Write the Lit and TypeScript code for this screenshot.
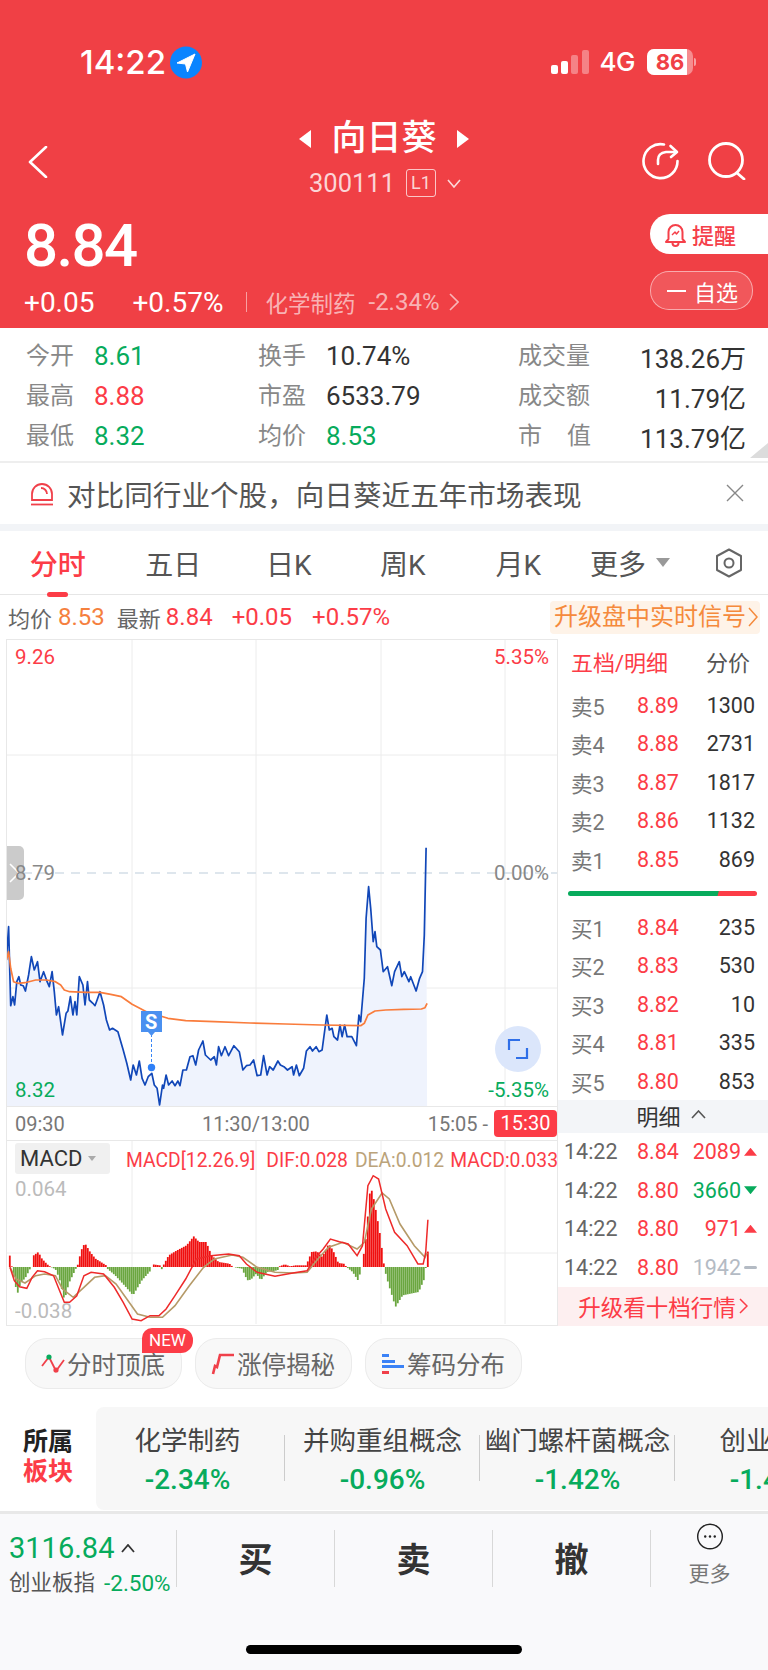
import { LitElement, html, css, svg } from 'lit';
import { customElement } from 'lit/decorators.js';

// traced from the reference, units are crop pixels (x / 2.8, y / 3)
const PRICE = [18,975,24,875,30,1112,36,1085,41,1110,47,1040,53,1025,58,1050,65,1052,71,1068,80,1020,88,965,96,1005,105,980,112,1040,122,1010,132,1040,138,1055,146,1010,152,1070,158,1140,164,1115,175,1200,185,1135,190,1128,197,1085,204,1140,210,1100,215,1140,222,1025,232,1050,238,1110,245,1040,250,1095,260,1105,266,1112,272,1095,280,1070,290,1110,298,1155,307,1185,315,1180,330,1190,345,1245,355,1285,366,1335,373,1290,382,1320,390,1278,398,1330,406,1350,415,1325,425,1315,432,1350,440,1360,447,1410,455,1350,458,1360,465,1320,472,1350,482,1338,490,1352,498,1338,504,1352,512,1305,522,1305,532,1265,540,1262,548,1290,556,1245,568,1218,575,1260,590,1275,600,1265,606,1290,612,1235,620,1262,630,1235,640,1262,655,1232,670,1250,680,1305,690,1292,700,1290,710,1275,720,1322,730,1320,738,1262,748,1320,755,1295,765,1305,778,1278,785,1290,795,1295,805,1305,818,1295,822,1320,830,1290,838,1322,850,1300,858,1248,868,1235,875,1248,885,1235,893,1250,902,1245,915,1140,922,1185,930,1180,935,1205,945,1215,952,1170,958,1205,965,1170,972,1205,985,1205,998,1232,1005,1140,1010,1160,1020,1030,1025,850,1032,755,1038,820,1045,920,1050,890,1055,935,1065,945,1073,1010,1085,995,1097,1052,1105,1010,1118,980,1125,1025,1132,1010,1145,1040,1150,1025,1165,1068,1175,1030,1183,1010,1188,900,1193,638];
const AVG = [18,975,24,950,30,1000,38,1040,50,1045,70,1043,100,1035,130,1035,155,1040,170,1050,180,1065,195,1070,240,1072,280,1072,310,1078,340,1085,370,1108,410,1130,470,1150,520,1157,600,1160,700,1164,800,1167,900,1170,1010,1172,1020,1165,1030,1140,1050,1128,1080,1125,1130,1123,1180,1122,1190,1118,1196,1105];
const DIF = [28,505,40,545,55,563,75,568,90,535,105,515,125,518,150,530,165,570,180,610,195,610,215,590,235,530,255,520,290,525,320,565,345,610,370,660,395,665,420,650,445,650,465,630,490,590,520,540,550,480,590,470,640,465,670,470,690,495,720,520,770,532,820,522,860,515,880,480,905,450,925,420,950,428,975,435,1000,470,1015,440,1030,260,1045,230,1060,240,1080,330,1105,400,1140,440,1170,495,1185,495,1192,460,1198,362];
const DEA = [28,505,45,540,70,552,100,530,125,525,155,530,175,570,205,595,235,565,265,535,295,530,325,555,355,600,385,645,420,655,455,655,490,620,530,560,570,505,600,480,650,468,680,475,720,505,770,520,820,522,860,520,890,480,920,445,960,430,1000,450,1020,430,1040,330,1070,282,1090,300,1120,375,1160,440,1190,475,1196,462];
const HIST = [24,40,30,5,32,-5,38,-40,46,-82,55,-50,70,-30,82,-5,88,0,92,35,105,45,115,25,130,8,140,0,150,-5,155,-10,165,-40,178,-100,190,-50,210,-5,215,5,225,50,235,72,250,45,265,25,280,15,295,5,298,-5,320,-25,350,-60,370,-85,395,-40,420,-10,425,8,445,5,450,-8,455,5,470,35,490,48,520,65,540,92,555,75,575,75,590,35,610,15,640,10,650,0,675,-5,690,-40,700,-38,715,-20,728,-40,745,-15,775,-10,780,2,795,8,810,2,825,5,855,5,870,45,885,47,900,30,918,70,930,50,945,12,960,10,970,-2,985,-15,1000,-40,1010,-5,1015,30,1022,85,1035,245,1045,200,1060,110,1070,30,1074,-5,1085,-50,1105,-120,1125,-85,1170,-75,1188,-30,1190,0,1197,60];

const GRID_X = [125, 249, 374, 498];

function pts(raw: number[], dy: number) {
  const out: string[] = [];
  for (let i = 0; i < raw.length; i += 2) {
    out.push(`${(raw[i] / 2.8 - 7).toFixed(1)},${(raw[i + 1] / 3 + dy).toFixed(1)}`);
  }
  return out.join(' ');
}

function histAt(x: number) {
  for (let i = 0; i < HIST.length - 2; i += 2) {
    if (x >= HIST[i] && x <= HIST[i + 2]) {
      const t = (x - HIST[i]) / (HIST[i + 2] - HIST[i]);
      return HIST[i + 1] + (HIST[i + 3] - HIST[i + 1]) * t;
    }
  }
  return 0;
}

const ASKS = [['卖5', '8.89', '1300'], ['卖4', '8.88', '2731'], ['卖3', '8.87', '1817'], ['卖2', '8.86', '1132'], ['卖1', '8.85', '869']];
const BIDS = [['买1', '8.84', '235'], ['买2', '8.83', '530'], ['买3', '8.82', '10'], ['买4', '8.81', '335'], ['买5', '8.80', '853']];
const TICKS = [['8.84', '2089', 'up'], ['8.80', '3660', 'down'], ['8.80', '971', 'up'], ['8.80', '1942', 'flat']];
const SECTORS = [['化学制药', '-2.34%'], ['并购重组概念', '-0.96%'], ['幽门螺杆菌概念', '-1.42%'], ['创业板综', '-1.47%']];

@customElement('app-root')
export class AppRoot extends LitElement {
  static styles = css`
    :host {
      display: block;
      width: 768px;
      height: 1670px;
      overflow: hidden;
      background: #fff;
      color: #333;
      font-family: Roboto, 'Noto Sans CJK SC', sans-serif;
    }
    svg { display: block; }

    .header { height: 328px; background: #f04045; color: #fff; display: flex; flex-direction: column; }
    .status { height: 115px; padding: 9px 72px 0 80px; box-sizing: border-box; display: flex; align-items: center; }
    .time { font: 500 33px/40px Inter, sans-serif; width: 90px; white-space: nowrap; }
    .status-right { margin-left: auto; display: flex; align-items: center; }
    .net { font: 500 26px/30px Inter, sans-serif; margin: 0 12px 0 11px; letter-spacing: -0.5px; }
    .battery { position: relative; width: 46px; height: 26px; border-radius: 7px; overflow: hidden; background: rgba(255,255,255,.4); }
    .battery i { display: block; width: 86%; height: 100%; background: #fff; }
    .battery b { position: absolute; inset: 0; text-align: center; font: 700 22px/26px Inter, sans-serif; color: #f04045; }
    .nub { width: 2px; height: 8px; background: rgba(255,255,255,.5); border-radius: 0 2px 2px 0; margin-left: 1px; }

    .nav { height: 90px; display: grid; grid-template-columns: 240px 1fr 240px; }
    .back { padding: 31px 0 0 28px; }
    .nav-mid { display: flex; flex-direction: column; align-items: center; }
    .title { display: flex; align-items: center; height: 44px; margin-top: 2px; gap: 20px; font-size: 35px; font-weight: 500; line-height: 44px; }
    .sub { display: flex; align-items: center; height: 40px; margin-top: 2px; color: rgba(255,255,255,.78); font-size: 25.5px; gap: 11px; padding-left: 2px; }
    .l1 { width: 30px; height: 28px; box-sizing: border-box; border: 1px solid rgba(255,255,255,.7); border-radius: 3px; font-size: 18px; line-height: 26px; text-align: center; }
    .nav-icons { display: flex; justify-content: flex-end; gap: 28px; padding: 27px 22px 0 0; }

    .quote { flex: 1; display: flex; justify-content: space-between; }
    .quote-left { padding: 9px 0 0 24px; }
    .price { font: 500 60px/64px Roboto, sans-serif; letter-spacing: -1.6px; }
    .change { display: flex; align-items: center; height: 30px; margin-top: 9px; font-size: 28px; }
    .change span { white-space: nowrap; }
    .pct { margin-left: 38px; }
    .sep { width: 1px; height: 20px; background: rgba(255,255,255,.5); margin: 0 18px 0 23px; }
    .sector { font-size: 22.5px; color: rgba(255,255,255,.62); display: flex; align-items: center; gap: 13px; }
    .sector em { font-style: normal; font-size: 24px; margin-right: -4px; }
    .quote-right { width: 118px; padding-top: 9px; }
    .btn-remind { height: 40px; background: #fff; border-radius: 20px 0 0 20px; display: flex; align-items: center; padding-left: 15px; gap: 6px; color: #f5404a; font-size: 22px; font-weight: 500; }
    .btn-fav { width: 103px; height: 39px; box-sizing: border-box; margin-top: 17px; border: 1px solid rgba(255,255,255,.5); background: rgba(255,255,255,.12); border-radius: 19px; display: flex; align-items: center; padding-left: 16px; gap: 8px; font-size: 22px; }
    .btn-fav i { width: 19px; height: 2px; background: #fff; }

    .stats { position: relative; height: 135px; box-sizing: border-box; padding: 8px 22px 0 26px; border-bottom: 2px solid #eee; display: grid; grid-template-columns: 232px 260px 1fr; grid-auto-rows: 40px; font-size: 26px; align-items: center; }
    .cell { display: flex; align-items: center; color: #333; }
    .cell label { width: 68px; color: #888; font-size: 24px; flex: none; margin-bottom: 5px; }
    .cell.wide { justify-content: space-between; }
    .cell.wide label { width: 73px; display: flex; justify-content: space-between; }
    .corner { position: absolute; right: 0; bottom: 3px; width: 18px; height: 15px; background: #dcdcdc; clip-path: polygon(100% 0, 100% 100%, 0 100%); }
    .green { color: #07ab5c; }
    .red { color: #fc3c47; }
    .orange { color: #f5803e; }

    .banner { height: 61px; display: flex; align-items: center; padding-left: 30px; font-size: 28.6px; color: #555; gap: 13px; position: relative; }
    .banner .close { position: absolute; right: 24px; top: 21px; }
    .gap { height: 7px; background: #f2f4f7; }

    .tabs { height: 64px; box-sizing: border-box; border-bottom: 1px solid #e6e6e6; display: grid; grid-template-columns: repeat(3, 115.5px) 112.5px 118.5px 105px 1fr; align-items: center; font-size: 28px; color: #555; position: relative; text-align: center; }
    .tab-on { color: #fc3c47; font-weight: 500; position: relative; }
    .tab-on::after { content: ''; position: absolute; left: 47px; bottom: -14px; width: 21px; height: 5px; border-radius: 3px; background: #fc3c47; }
    .more { display: flex; align-items: center; justify-content: center; gap: 10px; }
    .more i { width: 0; height: 0; border-left: 7.5px solid transparent; border-right: 7.5px solid transparent; border-top: 9px solid #999; }
    .hex { padding-left: 32px; }

    .info { height: 44px; display: flex; align-items: center; padding: 0 8px; font-size: 24px; color: #666; white-space: nowrap; }
    .info .cjk { font-size: 22px; }
    .pill { margin-left: auto; width: 210px; height: 33px; border-radius: 4px; background: #fef3e8; color: #f58a3c; font-size: 24px; line-height: 33px; padding-left: 4px; box-sizing: border-box; display: flex; align-items: center; gap: 2px; }

    .market { display: flex; height: 687px; }
    .chart { width: 552px; margin-left: 6px; box-sizing: border-box; border: 1px solid #e8e8e8; display: flex; flex-direction: column; }
    .plot { position: relative; height: 466px; flex: none; }
    .lbl { position: absolute; font-size: 20.5px; line-height: 24px; }
    .lbl.r { right: 8px; }
    .lbl.l { left: 8px; }
    .gray { color: #888; }
    .handle { position: absolute; left: 0; top: 206px; width: 17px; height: 54px; background: #cbcbcb; border-radius: 0 5px 5px 0; display: flex; align-items: center; }
    .expand { position: absolute; left: 488px; top: 386px; width: 46px; height: 46px; border-radius: 50%; background: #dbe6fb; display: flex; align-items: center; justify-content: center; }
    .axis { height: 35px; flex: none; box-sizing: border-box; border-top: 1px solid #e8e8e8; border-bottom: 1px solid #e8e8e8; display: grid; grid-template-columns: 187px 1fr auto; align-items: center; padding-left: 8px; font-size: 20px; color: #777; }
    .axis-end { display: flex; align-items: center; gap: 6px; }
    .axis-end b { width: 63px; height: 27px; background: #fc3c47; color: #fff; border-radius: 4px; font-weight: 400; text-align: center; line-height: 27px; }
    .macd { position: relative; flex: 1; }
    .macd-tag { position: absolute; left: 8px; top: 2px; width: 95px; height: 31px; background: #f0f0f0; border-radius: 3px; display: flex; align-items: center; padding-left: 5px; box-sizing: border-box; font-size: 22px; color: #333; gap: 6px; }
    .macd-tag i { width: 0; height: 0; border-left: 4.5px solid transparent; border-right: 4.5px solid transparent; border-top: 5px solid #aaa; }
    .legend { position: absolute; left: 119px; top: 8px; font-size: 19.3px; line-height: 24px; white-space: nowrap; color: #fc3c47; display: flex; }
    .legend .tan { color: #bba37a; margin: 0 6px 0 7px; }
    .legend .d { margin-left: 11px; }
    .light { color: #bbb; }

    .book { width: 210px; display: flex; flex-direction: column; font-size: 21.5px; }
    .book-head { height: 47px; padding: 0 18px 4px 13px; box-sizing: border-box; display: flex; align-items: center; justify-content: space-between; font-size: 22px; color: #fc3c47; flex: none; }
    .book-head span:last-child { color: #555; }
    .row { height: 38.5px; display: grid; grid-template-columns: 66px 1fr auto; align-items: center; padding: 0 13px; flex: none; color: #333; }
    .row span:first-child { color: #777; }
    .ratio { height: 5px; margin: 12px 11px 12.5px 10px; border-radius: 3px; background: linear-gradient(105deg, #07ab5c 79%, #fc3c47 79.5%); flex: none; }
    .detail { height: 33px; background: #f3f5f8; display: flex; align-items: center; justify-content: center; gap: 10px; font-size: 22px; flex: none; margin-top: -1px; padding: 0 0 3px 16px; box-sizing: border-box; }
    .tick { grid-template-columns: 73px 1fr auto; padding: 0 11px 0 6px; }
    .tick span:first-child { color: #666; }
    .q { display: flex; align-items: center; gap: 3px; }
    .tri { width: 13px; height: 8px; }
    .tri.up { background: #fc3c47; clip-path: polygon(50% 0, 100% 100%, 0 100%); }
    .tri.down { background: #07ab5c; clip-path: polygon(0 0, 100% 0, 50% 100%); }
    .tri.flat { background: #b4bbc4; height: 3px; border-radius: 2px; }
    .upgrade { flex: 1; background: #fdeff0; color: #fc3c47; font-size: 22.5px; display: flex; align-items: center; justify-content: center; gap: 3px; }

    .chips { height: 81px; box-sizing: border-box; padding: 12px 0 0 25px; display: flex; gap: 13px; flex: none; }
    .chip { position: relative; width: 157px; height: 51px; box-sizing: border-box; background: #f8f8f8; border: 1px solid #ebebeb; border-radius: 22px; display: flex; align-items: center; padding-left: 15px; gap: 2px; font-size: 24.5px; color: #666; }
    .new { position: absolute; left: 116px; top: -11px; width: 51px; height: 25px; background: #fc3c47; color: #fff; font-size: 17px; line-height: 25px; text-align: center; border-radius: 10px 12px 12px 0; }

    .sectors { height: 103px; display: flex; }
    .sec-title { width: 96px; box-sizing: border-box; padding: 20px 0 0 23px; font-size: 25px; font-weight: 700; line-height: 30px; color: #222; flex: none; }
    .sec-panel { flex: 1; background: #f7f7f7; border-radius: 8px 0 0 8px; display: flex; overflow: hidden; }
    .sec { position: relative; width: 195px; flex: none; text-align: center; font-size: 26.5px; color: #444; padding-top: 15px; line-height: 38px; white-space: nowrap; box-sizing: border-box; }
    .sec:first-child { margin-left: -6px; }
    .sec em { display: block; font-style: normal; font-size: 28px; font-weight: 500; color: #07ab5c; margin-top: 1px; }
    .sec::after { content: ''; position: absolute; right: 0; top: 28px; height: 46px; width: 1px; background: #ccc; }

    .foot { height: 159px; box-sizing: border-box; background: #f9f9fb; border-top: 3px solid #e8e8e8; margin-top: 1px; padding-top: 16px; }
    .foot-row { height: 57px; display: flex; }
    .idx { width: 176px; box-sizing: border-box; padding-left: 9px; flex: none; white-space: nowrap; }
    .idx-top { display: flex; align-items: center; gap: 7px; font-size: 29px; line-height: 32px; color: #07ab5c; height: 36px; }
    .idx-sub { display: flex; align-items: center; gap: 9px; font-size: 21.5px; line-height: 30px; color: #555; margin-top: 2px; }
    .idx-sub .green { font-size: 22.5px; }
    .act { width: 158px; box-sizing: border-box; border-left: 1px solid #d8d8d8; flex: none; text-align: center; font-size: 34px; font-weight: 700; line-height: 61px; color: #333; height: 57px; }
    .act.more-act { width: 118px; font-size: 21px; font-weight: 400; color: #777; line-height: 26px; display: flex; flex-direction: column; align-items: center; }
    .act.more-act svg { margin-top: -7px; margin-bottom: 11px; }
    .home { width: 276px; height: 9px; border-radius: 5px; background: #000; margin: 58px auto 0; }
  `;

  private statusBar() {
    return html`<div class="status">
      <span class="time">14:22</span>
      <svg width="32" height="33" viewBox="0 0 32 33"><circle cx="16" cy="16.5" r="16" fill="#0a84ff"/><path d="M25 8 L7 17 L15.5 18 L17.5 26 Z" fill="#fff" stroke="#fff" stroke-linejoin="round"/></svg>
      <div class="status-right">
        <svg width="38" height="24" viewBox="0 0 38 24"><rect x="0" y="15" width="7" height="9" rx="2" fill="#fff"/><rect x="10" y="11" width="7" height="13" rx="2" fill="#fff"/><rect x="20" y="5" width="7" height="19" rx="2" fill="#fff" fill-opacity=".35"/><rect x="31" y="0" width="7" height="24" rx="2" fill="#fff" fill-opacity=".35"/></svg>
        <span class="net">4G</span>
        <div class="battery"><i></i><b>86</b></div><div class="nub"></div>
      </div>
    </div>`;
  }

  private navBar() {
    return html`<div class="nav">
      <div class="back"><svg width="20" height="32" viewBox="0 0 20 32"><path d="M18 1 L2 16 L18 31" fill="none" stroke="#fff" stroke-width="2.6" stroke-linecap="round" stroke-linejoin="round"/></svg></div>
      <div class="nav-mid">
        <div class="title">
          <svg width="12" height="18" viewBox="0 0 12 18"><path d="M12 0 V18 L0 9 Z" fill="#fff"/></svg>
          <span>向日葵</span>
          <svg width="12" height="18" viewBox="0 0 12 18"><path d="M0 0 V18 L12 9 Z" fill="#fff"/></svg>
        </div>
        <div class="sub"><span>300111</span><span class="l1">L1</span>
          <svg width="14" height="9" viewBox="0 0 14 9"><path d="M1 1 L7 8 L13 1" fill="none" stroke="rgba(255,255,255,.8)" stroke-width="1.6"/></svg></div>
      </div>
      <div class="nav-icons">
        <svg width="38" height="38" viewBox="0 0 38 38" fill="none" stroke="#fff" stroke-width="2.6" stroke-linecap="round" stroke-linejoin="round">
          <path d="M22 2.5 A17 17 0 1 0 35.5 19"/><path d="M16 22 V18 Q16 11 24 10 H34"/><path d="M28.5 4 L35 10 L29 15"/>
        </svg>
        <svg width="38" height="38" viewBox="0 0 38 38" fill="none" stroke="#fff" stroke-width="2.8" stroke-linecap="round">
          <circle cx="18" cy="18" r="16.5"/><path d="M29 31 L36 37"/>
        </svg>
      </div>
    </div>`;
  }

  private quoteBlock() {
    return html`<div class="quote">
      <div class="quote-left">
        <div class="price">8.84</div>
        <div class="change">
          <span>+0.05</span><span class="pct">+0.57%</span><span class="sep"></span>
          <span class="sector">化学制药 <em>-2.34%</em>
            <svg width="10" height="20" viewBox="0 0 10 20"><path d="M1 2 L9 10 L1 18" fill="none" stroke="rgba(255,255,255,.62)" stroke-width="1.6"/></svg></span>
        </div>
      </div>
      <div class="quote-right">
        <div class="btn-remind">
          <svg width="21" height="25" viewBox="0 0 21 25" fill="none" stroke="#f5404a" stroke-width="2" stroke-linejoin="round">
            <path d="M3.5 17 V10 a7 7 0 0 1 14 0 V17 L20 20 H1 Z"/><path d="M7.5 21 a3 3 0 0 0 6 0"/><path d="M7 13 L10 10 L11.5 12 L14 9" stroke-width="1.4"/>
          </svg>
          <span>提醒</span>
        </div>
        <div class="btn-fav"><i></i><span>自选</span></div>
      </div>
    </div>`;
  }

  private stats() {
    return html`<div class="stats">
      <div class="cell"><label>今开</label><span class="green">8.61</span></div>
      <div class="cell"><label>换手</label><span>10.74%</span></div>
      <div class="cell wide"><label>成交量</label><span>138.26万</span></div>
      <div class="cell"><label>最高</label><span class="red">8.88</span></div>
      <div class="cell"><label>市盈</label><span>6533.79</span></div>
      <div class="cell wide"><label>成交额</label><span>11.79亿</span></div>
      <div class="cell"><label>最低</label><span class="green">8.32</span></div>
      <div class="cell"><label>均价</label><span class="green">8.53</span></div>
      <div class="cell wide"><label><span>市</span><span>值</span></label><span>113.79亿</span></div>
      <div class="corner"></div>
    </div>`;
  }

  private plot() {
    const area = `${pts(PRICE, -5)} ${(1196 / 2.8 - 7).toFixed(1)},466 ${(18 / 2.8 - 7).toFixed(1)},466`;
    return html`<div class="plot">
      <svg width="550" height="466" viewBox="0 0 550 466">
        ${GRID_X.map((x) => svg`<line x1=${x} x2=${x} y1="0" y2="466" stroke="#ececec" stroke-width="1"/>`)}
        <line x1="0" x2="550" y1="115" y2="115" stroke="#ececec"/>
        <line x1="0" x2="550" y1="348" y2="348" stroke="#ececec"/>
        <polygon points=${area} fill="#eff3fd"/>
        <line x1="0" x2="550" y1="233" y2="233" stroke="#d3dee8" stroke-width="1.5" stroke-dasharray="9 7"/>
        <polyline points=${pts(PRICE, -5)} fill="none" stroke="#1147b8" stroke-width="1.7" stroke-linejoin="round"/>
        <polyline points=${pts(AVG, -5)} fill="none" stroke="#f97c3c" stroke-width="1.7" stroke-linejoin="round"/>
        <line x1="144.5" x2="144.5" y1="394" y2="428" stroke="#3a86f5" stroke-width="1" stroke-dasharray="3 2"/>
        <circle cx="144.5" cy="427.5" r="3.7" fill="#2f80f7"/>
        <path d="M134 371 H155 V392 H148 L144.5 396 L141 392 H134 Z" fill="#4a90f0"/>
      </svg>
      <div class="handle"><svg width="14" height="26" viewBox="0 0 14 26"><path d="M3 4 L12 13 L3 22" fill="none" stroke="#fff" stroke-width="1.6"/></svg></div>
      <span class="lbl l red" style="top:5px">9.26</span>
      <span class="lbl r red" style="top:5px">5.35%</span>
      <span class="lbl l gray" style="top:221px">8.79</span>
      <span class="lbl r gray" style="top:221px">0.00%</span>
      <span class="lbl l green" style="top:438px">8.32</span>
      <span class="lbl r green" style="top:438px">-5.35%</span>
      <span class="lbl" style="left:138px;top:370px;color:#fff;font-weight:700;font-size:20px">S</span>
      <div class="expand"><svg width="24" height="24" viewBox="0 0 24 24" fill="none" stroke="#2f6fe8" stroke-width="2.2"><path d="M3 13 V3 H14"/><path d="M21 11 V21 H10"/></svg></div>
    </div>`;
  }

  private macd() {
    const bars = [];
    for (let x = 25; x < 1198; x += 5.6) {
      const h = histAt(x) / 3;
      if (Math.abs(h) < 0.4) continue;
      const bx = x / 2.8 - 7;
      bars.push(svg`<rect x=${bx.toFixed(1)} y=${h > 0 ? 126 - h : 126} width="1.8" height=${Math.abs(h)} fill=${h > 0 ? '#f00f0f' : '#6aa63f'}/>`);
    }
    return html`<div class="macd">
      <svg width="550" height="183" viewBox="0 0 550 183">
        ${GRID_X.map((x) => svg`<line x1=${x} x2=${x} y1="0" y2="183" stroke="#ececec"/>`)}
        <line x1="0" x2="550" y1="112" y2="112" stroke="#ececec"/>
        ${bars}
        <polyline points=${pts(DEA, -42)} fill="none" stroke="#b59a68" stroke-width="1.6"/>
        <polyline points=${pts(DIF, -42)} fill="none" stroke="#ee2a2a" stroke-width="1.5"/>
      </svg>
      <div class="macd-tag"><span>MACD</span><i></i></div>
      <div class="legend"><span>MACD[12.26.9]</span><span class="d">DIF:0.028</span><span class="tan">DEA:0.012</span><span>MACD:0.033</span></div>
      <span class="lbl l light" style="top:36px">0.064</span>
      <span class="lbl l light" style="top:158px">-0.038</span>
    </div>`;
  }

  private book() {
    const row = (r: string[]) => html`<div class="row"><span>${r[0]}</span><span class="red">${r[1]}</span><span>${r[2]}</span></div>`;
    return html`<div class="book">
      <div class="book-head"><span>五档/明细</span><span>分价</span></div>
      ${ASKS.map(row)}
      <div class="ratio"></div>
      ${BIDS.map(row)}
      <div class="detail"><span>明细</span><svg width="15" height="9" viewBox="0 0 15 9"><path d="M1 8 L7.5 1 L14 8" fill="none" stroke="#555" stroke-width="1.6"/></svg></div>
      ${TICKS.map((t) => {
        const color = t[2] === 'up' ? 'red' : t[2] === 'down' ? 'green' : 'flat-q';
        return html`<div class="row tick"><span>14:22</span><span class="red">${t[0]}</span>
          <span class="q ${color}" style=${color === 'flat-q' ? 'color:#b4bbc4' : ''}>${t[1]}<i class="tri ${t[2]}"></i></span></div>`;
      })}
      <div class="upgrade"><span>升级看十档行情</span><svg width="9" height="16" viewBox="0 0 9 16"><path d="M1 1 L8 8 L1 15" fill="none" stroke="#fc3c47" stroke-width="1.5"/></svg></div>
    </div>`;
  }

  private chips() {
    return html`<div class="chips">
      <div class="chip">
        <svg width="24" height="20" viewBox="0 0 24 20" fill="none"><path d="M1 12 L8 3 L15 17 L23 6" stroke="#f0404a" stroke-width="1.8"/><circle cx="8" cy="3" r="2.6" fill="#07ab5c"/><circle cx="15" cy="16" r="2.6" fill="#f0404a"/></svg>
        <span>分时顶底</span><span class="new">NEW</span>
      </div>
      <div class="chip">
        <svg width="24" height="22" viewBox="0 0 24 22" fill="none" stroke="#f0404a" stroke-width="2.6"><path d="M2 21 L4 13 L6 14 L9 2 H23"/></svg>
        <span>涨停揭秘</span>
      </div>
      <div class="chip">
        <svg width="24" height="22" viewBox="0 0 24 22"><rect x="1" y="1" width="7" height="3" fill="#3b82f6"/><rect x="1" y="7" width="13" height="3" fill="#3b82f6"/><rect x="1" y="12" width="22" height="3" fill="#3b82f6"/><rect x="1" y="18" width="7" height="3" fill="#f0404a"/></svg>
        <span>筹码分布</span>
      </div>
    </div>`;
  }

  render() {
    return html`
      <div class="header">${this.statusBar()}${this.navBar()}${this.quoteBlock()}</div>
      ${this.stats()}
      <div class="banner">
        <svg width="24" height="24" viewBox="0 0 24 24" fill="none" stroke="#f0404a" stroke-width="1.8"><path d="M2 18 V12 a10 10 0 0 1 20 0 V18 Z"/><path d="M11 6 a6 6 0 0 1 6 6"/><path d="M1 22.5 H23"/></svg>
        <span>对比同行业个股，向日葵近五年市场表现</span>
        <svg class="close" width="18" height="18" viewBox="0 0 18 18"><path d="M1 1 L17 17 M17 1 L1 17" stroke="#888" stroke-width="1.4"/></svg>
      </div>
      <div class="gap"></div>
      <div class="tabs">
        <span class="tab-on">分时</span><span>五日</span><span>日K</span><span>周K</span><span>月K</span>
        <span class="more">更多<i></i></span>
        <span class="hex"><svg width="28" height="30" viewBox="0 0 28 30" fill="none" stroke="#666" stroke-width="2" stroke-linejoin="round"><path d="M14 1.5 L26 8 V22 L14 28.5 L2 22 V8 Z"/><circle cx="14" cy="15" r="4.5"/></svg></span>
      </div>
      <div class="info">
        <span class="cjk">均价</span><span class="orange" style="margin-left:6px">8.53</span>
        <span class="cjk" style="margin-left:12px">最新</span><span class="red" style="margin-left:5px">8.84</span>
        <span class="red" style="margin-left:19px">+0.05</span><span class="red" style="margin-left:20px">+0.57%</span>
        <span class="pill"><span>升级盘中实时信号</span><svg width="10" height="20" viewBox="0 0 10 20"><path d="M1 1 L9 10 L1 19" fill="none" stroke="#f58a3c" stroke-width="1.5"/></svg></span>
      </div>
      <div class="market">
        <div class="chart">
          ${this.plot()}
          <div class="axis"><span>09:30</span><span>11:30/13:00</span><span class="axis-end"><span>15:05 -</span><b>15:30</b></span></div>
          ${this.macd()}
        </div>
        ${this.book()}
      </div>
      ${this.chips()}
      <div class="sectors">
        <div class="sec-title">所属<br /><span class="red">板块</span></div>
        <div class="sec-panel">
          ${SECTORS.map((s) => html`<div class="sec">${s[0]}<em>${s[1]}</em></div>`)}
        </div>
      </div>
      <div class="foot">
        <div class="foot-row">
          <div class="idx">
            <div class="idx-top"><span>3116.84</span><svg width="14" height="9" viewBox="0 0 14 9"><path d="M1 8 L7 1 L13 8" fill="none" stroke="#333" stroke-width="1.8"/></svg></div>
            <div class="idx-sub"><span>创业板指</span><span class="green">-2.50%</span></div>
          </div>
          <div class="act">买</div><div class="act">卖</div><div class="act">撤</div>
          <div class="act more-act">
            <svg width="34" height="34" viewBox="0 0 34 34" fill="none"><circle cx="17" cy="17" r="15.5" stroke="#222" stroke-width="1.8"/><circle cx="11" cy="17" r="1.5" fill="#222"/><circle cx="17" cy="17" r="1.5" fill="#222"/><circle cx="23" cy="17" r="1.5" fill="#222"/></svg>
            <span>更多</span>
          </div>
        </div>
        <div class="home"></div>
      </div>
    `;
  }
}
